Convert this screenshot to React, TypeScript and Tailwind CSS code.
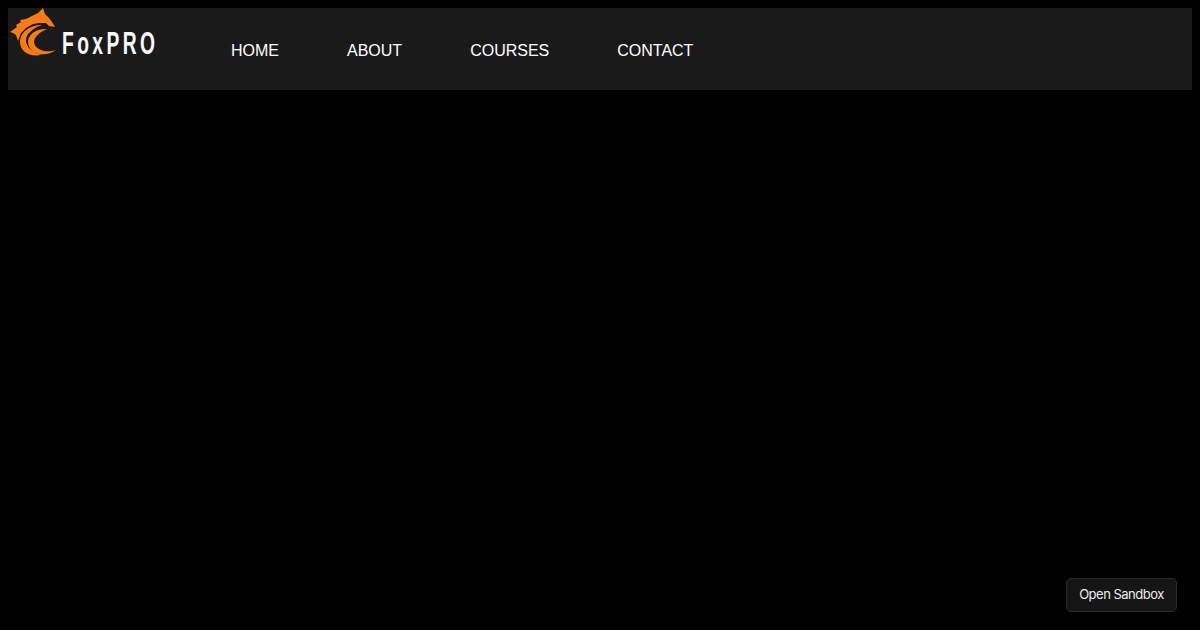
import React from 'react';

function FoxLogo() {
  return (
    <svg width="48" height="50" viewBox="0 0 48 50" className="shrink-0">
      {/* head */}
      <path
        fill="#f97b16"
        d="M0 24 L7 19 L6 17 L11 14 L10 12 L16 11 L22 8 L28 5 L33 0 L35 6 L39 10 L42 14 L45 19 L39 18 L36 15 L30 15 L23 16 L16 20 L11 25 L8 33 L6 27 L3 25 Z"
      />
      {/* outer swoosh */}
      <path
        fill="#f97b16"
        d="M32 17 C20 17 10 24 10 34 C10 43 19 49 31 47 C23 44 16 40 16 32 C16 26 23 20 32 17 Z"
      />
      {/* inner swoosh */}
      <path
        fill="#f97b16"
        d="M37 21 C27 20 18 26 18 34 C18 45 34 51 46 42 C38 45 25 43 24 34 C24 29 30 24 37 21 Z"
      />
    </svg>
  );
}

export default function App() {
  const links = ['HOME', 'ABOUT', 'COURSES', 'CONTACT'];

  return (
    <div className="min-h-screen bg-black p-2 relative font-['Liberation_Sans',sans-serif]">
      <nav className="h-[82px] bg-[#1a1a1a] flex items-start">
        <div className="w-[223px] flex items-start pl-[2px] shrink-0">
          <FoxLogo />
          <span className="ml-[4px] mt-[20px] text-[31px] leading-[32px] font-bold tracking-[5.5px] text-[#fafafa] origin-left scale-x-[0.62]">
            FoxPRO
          </span>
        </div>
        <ul className="flex gap-[68px] pt-[34px]">
          {links.map((l) => (
            <li key={l} className="text-white text-base leading-[18px]">
              {l}
            </li>
          ))}
        </ul>
      </nav>
      <button className="absolute right-[23px] bottom-[18px] h-[34px] w-[111px] rounded-[5px] border border-[#2a2a2a] bg-[#151515] text-[13px] tracking-[-0.5px] text-[#ededed] font-['Inter',sans-serif]">
        Open Sandbox
      </button>
    </div>
  );
}
